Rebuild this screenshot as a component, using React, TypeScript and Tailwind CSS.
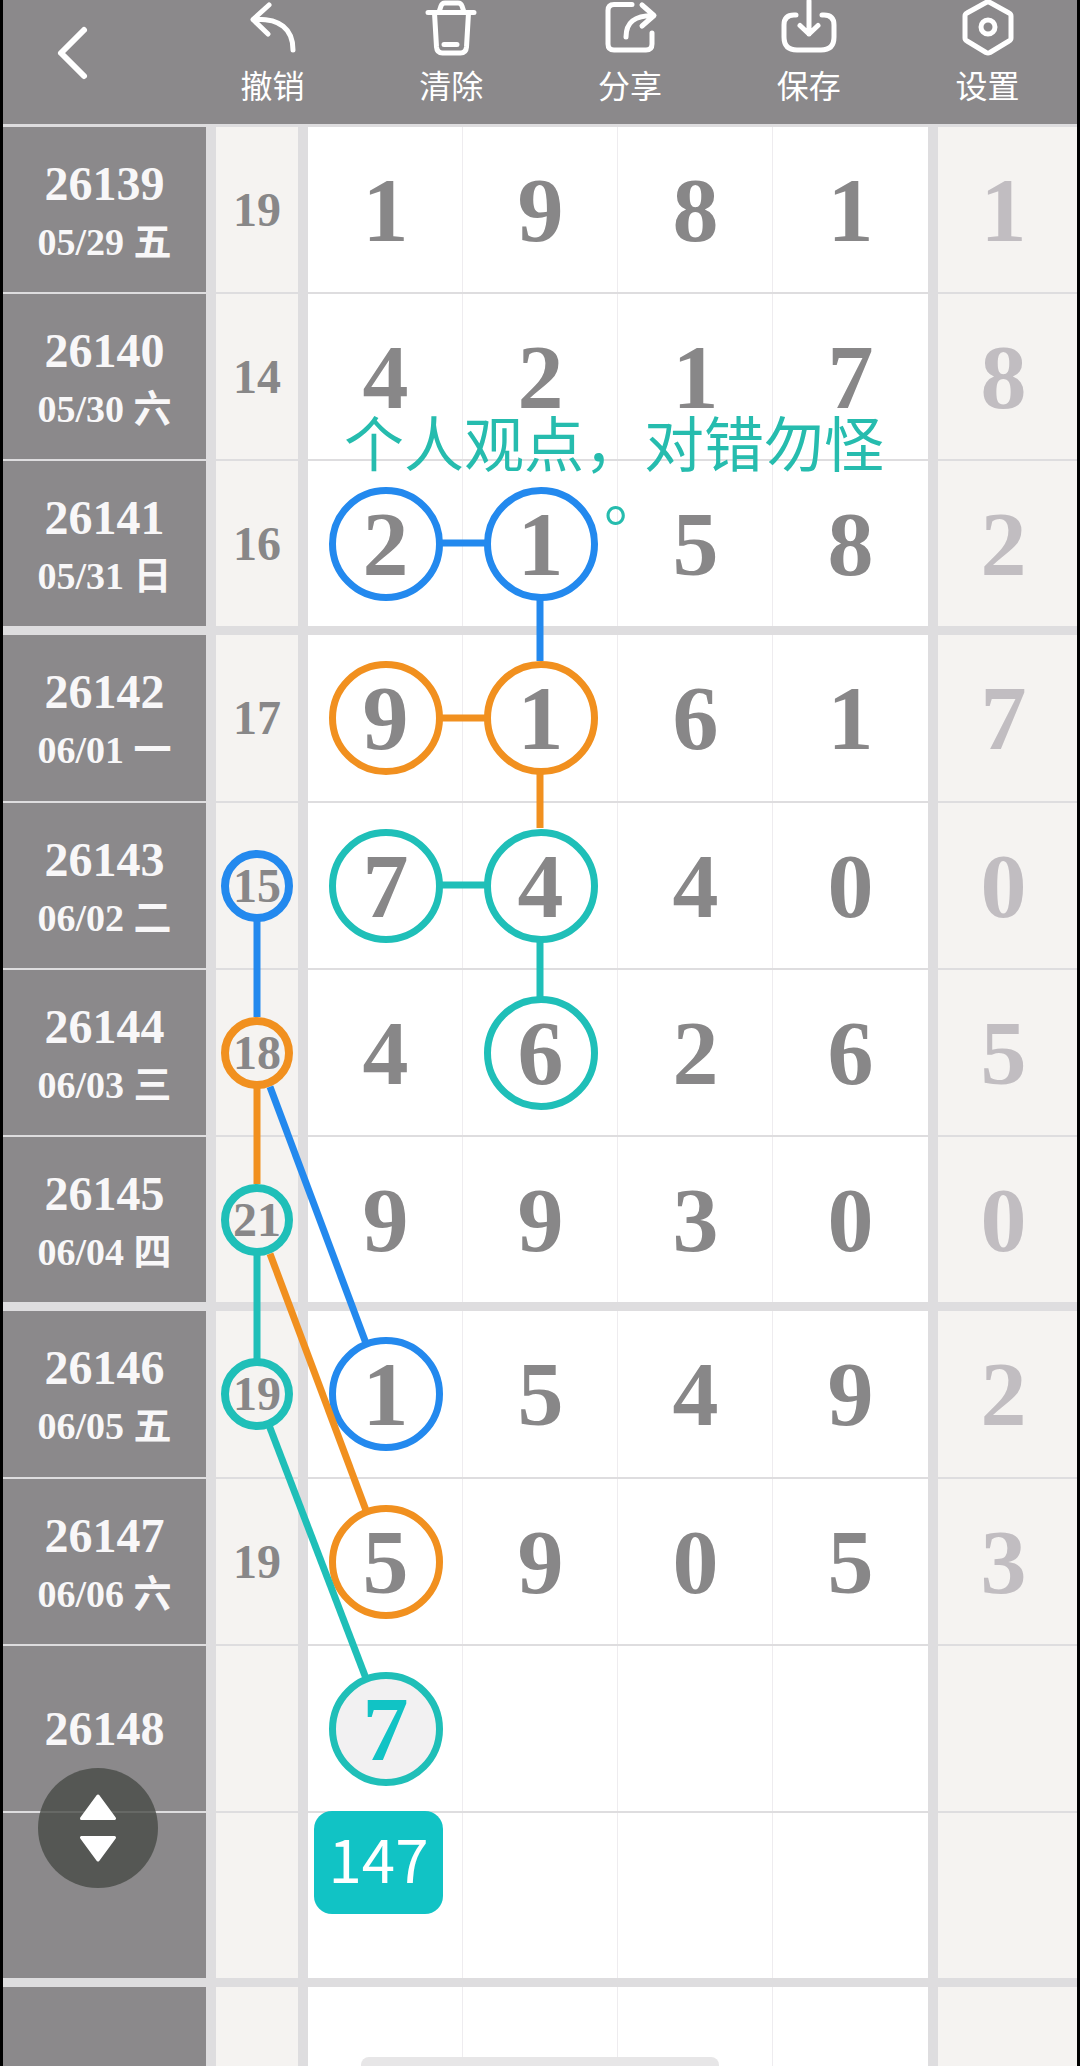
import type { ReactNode } from 'react'
import clsx from 'clsx'

type Tone = 'blue' | 'orange' | 'teal'

interface Draw {
  period: string
  date?: string
  sum?: string
  sumRing?: Tone
  digits: string[]
  rings?: (Tone | null)[]
  extra?: string
  groupStart?: boolean
  groupEnd?: boolean
}

const draws: Draw[] = [
  { period: '26139', date: '05/29 五', sum: '19', digits: ['1', '9', '8', '1'], extra: '1' },
  { period: '26140', date: '05/30 六', sum: '14', digits: ['4', '2', '1', '7'], extra: '8' },
  { period: '26141', date: '05/31 日', sum: '16', digits: ['2', '1', '5', '8'], rings: ['blue', 'blue'], extra: '2', groupEnd: true },
  { period: '26142', date: '06/01 一', sum: '17', digits: ['9', '1', '6', '1'], rings: ['orange', 'orange'], extra: '7', groupStart: true },
  { period: '26143', date: '06/02 二', sum: '15', sumRing: 'blue', digits: ['7', '4', '4', '0'], rings: ['teal', 'teal'], extra: '0' },
  { period: '26144', date: '06/03 三', sum: '18', sumRing: 'orange', digits: ['4', '6', '2', '6'], rings: [null, 'teal'], extra: '5' },
  { period: '26145', date: '06/04 四', sum: '21', sumRing: 'teal', digits: ['9', '9', '3', '0'], extra: '0', groupEnd: true },
  { period: '26146', date: '06/05 五', sum: '19', sumRing: 'teal', digits: ['1', '5', '4', '9'], rings: ['blue'], extra: '2', groupStart: true },
  { period: '26147', date: '06/06 六', sum: '19', digits: ['5', '9', '0', '5'], rings: ['orange'], extra: '3' },
]

const ringClass: Record<Tone, string> = {
  blue: 'border-[#2389ee]',
  orange: 'border-[#f1901f]',
  teal: 'border-[#1fbfb8]',
}

const lineClass: Record<Tone, string> = {
  blue: 'stroke-[#2389ee]',
  orange: 'stroke-[#f1901f]',
  teal: 'stroke-[#1fbfb8]',
}

// column centres and row centres inside the table
const X = { sum: 254, d1: 382, d2: 537 }
const Y = [85, 252, 419, 594, 761, 928, 1095, 1270, 1437, 1604]

// each end is x, y and the radius of the ring it starts from
const links: { tone: Tone; from: [number, number, number]; to: [number, number, number] }[] = [
  { tone: 'blue', from: [X.d1, Y[2], 57], to: [X.d2, Y[2], 57] },
  { tone: 'blue', from: [X.d2, Y[2], 57], to: [X.d2, Y[3], 60] },
  { tone: 'orange', from: [X.d1, Y[3], 57], to: [X.d2, Y[3], 57] },
  { tone: 'orange', from: [X.d2, Y[3], 57], to: [X.d2, Y[4], 60] },
  { tone: 'teal', from: [X.d1, Y[4], 57], to: [X.d2, Y[4], 57] },
  { tone: 'teal', from: [X.d2, Y[4], 57], to: [X.d2, Y[5], 57] },
  { tone: 'blue', from: [X.sum, Y[4], 36], to: [X.sum, Y[5], 38] },
  { tone: 'orange', from: [X.sum, Y[5], 36], to: [X.sum, Y[6], 38] },
  { tone: 'teal', from: [X.sum, Y[6], 36], to: [X.sum, Y[7], 36] },
  { tone: 'blue', from: [X.sum, Y[5], 40], to: [X.d1, Y[7], 57] },
  { tone: 'orange', from: [X.sum, Y[6], 40], to: [X.d1, Y[8], 57] },
  { tone: 'teal', from: [X.sum, Y[7], 36], to: [X.d1, Y[9], 57] },
]

function Links() {
  return (
    <svg
      className="pointer-events-none absolute left-0 top-0 h-[1700px] w-full"
      viewBox="0 0 1074 1700"
      preserveAspectRatio="none"
      aria-hidden="true"
    >
      {links.map(({ tone, from, to }, i) => {
        const dx = to[0] - from[0]
        const dy = to[1] - from[1]
        const len = Math.hypot(dx, dy)
        const a = (from[2] - 3) / len
        const b = (to[2] - 3) / len
        return (
          <line
            key={i}
            x1={from[0] + dx * a}
            y1={from[1] + dy * a}
            x2={to[0] - dx * b}
            y2={to[1] - dy * b}
            strokeWidth="7"
            className={lineClass[tone]}
          />
        )
      })}
    </svg>
  )
}

function ToolButton({ label, children }: { label: string; children: ReactNode }) {
  return (
    <button type="button" className="flex flex-1 flex-col items-center">
      <svg
        className="size-14"
        viewBox="0 0 56 56"
        fill="none"
        stroke="currentColor"
        strokeWidth="5"
        strokeLinecap="round"
        strokeLinejoin="round"
        aria-hidden="true"
      >
        {children}
      </svg>
      <span className="mt-2 text-[32px] leading-[40px]">{label}</span>
    </button>
  )
}

function Toolbar() {
  return (
    <header className="flex h-[124px] shrink-0 bg-[#8b898b] text-white">
      <button type="button" aria-label="返回" className="w-[180px] shrink-0 pl-[42px]">
        <svg className="h-[108px] w-14" viewBox="0 0 56 108" fill="none" stroke="currentColor" strokeWidth="6" strokeLinecap="round" strokeLinejoin="round">
          <path d="M39 22 16 45l23 23" />
        </svg>
      </button>
      <ToolButton label="撤销">
        <path d="M25 5 9 19.500l15 14.500M9 19.500C36 18 49 29 49 50" />
      </ToolButton>
      <ToolButton label="清除">
        <path d="M5 12.500h46M16 12l2-6q1-3 4-3h13q3 0 4 3l2 6M11.500 13l2 34q.5 6 6 6h18q5.500 0 6-6l2-34M21 44.500h13" />
      </ToolButton>
      <ToolButton label="分享">
        <path d="M30 4.500H12q-6 0-6 6V44q0 6 6 6h32q6 0 6-6V33" />
        <path d="M24 37C24 22 33 15.500 51 15.500M40 5l12 10.500L40 26" />
      </ToolButton>
      <ToolButton label="保存">
        <path d="M15 15h-2Q3 15 3 25v12q0 13 13 13h24q13 0 13-13V25q0-10-10-10h-2" />
        <path d="M28 1v33M19 25.500l9 8.500 9-8.500" />
      </ToolButton>
      <ToolButton label="设置">
        <path d="M26 2.500q2-1 4 0L49 13q2 1 2 3v22q0 2-2 3L30 52.500q-2 1-4 0L7 41q-2-1-2-3V16q0-2 2-3Z" />
        <circle cx="28" cy="27" r="7" />
      </ToolButton>
    </header>
  )
}

const lineColor = 'border-[#dedddf]'

function Row({
  head,
  sum,
  cells,
  extra,
  groupStart,
  groupEnd,
}: {
  head?: ReactNode
  sum?: ReactNode
  cells: ReactNode[]
  extra?: string
  groupStart?: boolean
  groupEnd?: boolean
}) {
  const bottom = groupEnd ? 'border-b-9' : 'border-b-2'
  const height = groupEnd ? 'h-[174px]' : groupStart ? 'h-[168px]' : 'h-[167px]'
  return (
    <tr className={height}>
      <th scope="row" className={clsx('bg-[#8b898b] p-0 text-[#f8f7f8]', lineColor, bottom)}>
        {head}
      </th>
      <td className={clsx('border-x-10 bg-[#f5f3f1] p-0 text-[48px] leading-[48px]', lineColor, bottom)}>
        <div className="flex justify-center">{sum}</div>
      </td>
      {cells.map((cell, i) => (
        <td key={i} className={clsx('relative p-0 text-[92px] leading-[92px]', lineColor, bottom)}>
          {i < 3 && <span className="absolute inset-y-0 right-0 w-px bg-[#eeecef]" />}
          <div className="flex justify-center">{cell}</div>
        </td>
      ))}
      <td className={clsx('border-l-10 bg-[#f5f3f1] py-0 pl-0 pr-2 text-center text-[92px] leading-[92px] text-[#c1bdc1]', lineColor, bottom)}>
        {extra}
      </td>
    </tr>
  )
}

function Ring({ tone, small, children }: { tone?: Tone | null; small?: boolean; children: ReactNode }) {
  if (!tone) return <>{children}</>
  return (
    <span
      className={clsx(
        'flex shrink-0 items-center justify-center rounded-full',
        small ? 'size-18 border-8' : 'size-[114px] border-[7px]',
        ringClass[tone],
      )}
    >
      {children}
    </span>
  )
}

function TrendTable() {
  return (
    <table className="w-full table-fixed border-separate border-spacing-0 border-t-3 border-[#dedddf] bg-white font-['Liberation_Serif','Noto_Sans_CJK_SC',serif] font-bold text-[#888788]">
      <colgroup>
        <col className="w-[203px]" />
        <col className="w-[102px]" />
        <col className="w-[155px]" />
        <col className="w-[155px]" />
        <col className="w-[155px]" />
        <col className="w-[155px]" />
        <col className="w-[149px]" />
      </colgroup>
      <tbody>
        {draws.map((d) => (
          <Row
            key={d.period}
            groupStart={d.groupStart}
            groupEnd={d.groupEnd}
            head={
              <div className="pt-1.5">
                <div className="text-[48px] leading-[58px]">{d.period}</div>
                <div className="text-[38px] leading-[58px]">{d.date}</div>
              </div>
            }
            sum={<Ring small tone={d.sumRing}>{d.sum}</Ring>}
            cells={d.digits.map((n, i) => (
              <Ring key={i} tone={d.rings?.[i]}>{n}</Ring>
            ))}
            extra={d.extra}
          />
        ))}
        <Row
          head={<div className="text-[48px] leading-[58px]">26148</div>}
          cells={[
            <span className="flex size-[114px] shrink-0 items-center justify-center rounded-full border-[7px] border-[#1fbfb8] bg-[#f2f1f2] text-[#11c3c5]">
              7
            </span>,
            null,
            null,
            null,
          ]}
        />
        <Row
          groupEnd
          cells={[
            <div className="absolute -top-0.5 left-1.5 flex h-[103px] w-[129px] items-center justify-center rounded-[18px] bg-[#11c3c5] pb-3 font-['Noto_Sans_CJK_SC',sans-serif] text-[60px] leading-[60px] font-normal text-white">
              147
            </div>,
            null,
            null,
            null,
          ]}
        />
        <Row groupStart cells={[null, null, null, null]} />
      </tbody>
    </table>
  )
}

export default function App() {
  return (
    <div className="h-screen bg-black px-[3px] font-['Noto_Sans_CJK_SC',sans-serif]">
      <div className="relative flex h-full flex-col overflow-hidden">
        <Toolbar />
        <main className="relative min-h-0 flex-1">
          <TrendTable />
          <Links />
          <p className="absolute left-[341px] top-[290px] text-[60px] leading-[54px] whitespace-nowrap text-[#26bcae]">
            个人观点，对错勿怪
            <span className="block pl-65">。</span>
          </p>
        </main>
        <button
          type="button"
          aria-label="上下滚动"
          className="absolute bottom-[178px] left-[35px] flex size-[120px] items-center justify-center rounded-full bg-[#474b46]/80 text-white"
        >
          <svg className="h-[72px] w-10" viewBox="0 0 40 72" fill="currentColor" stroke="currentColor" strokeWidth="3" strokeLinejoin="round" aria-hidden="true">
            <path d="M20 4 36.500 26.500h-33ZM20 68 3.500 45.500h33Z" />
          </svg>
        </button>
        <div className="absolute bottom-0 left-1/2 h-[9px] w-1/3 -translate-x-1/2 rounded-t-lg bg-[#e7e6e7]" />
      </div>
    </div>
  )
}
